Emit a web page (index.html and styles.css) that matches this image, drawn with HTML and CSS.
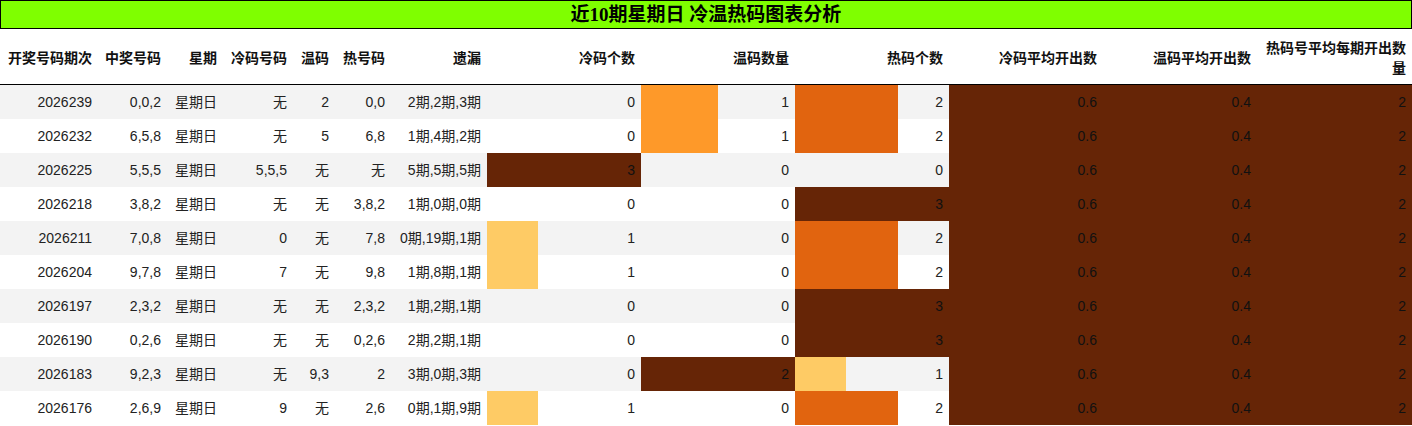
FILE: index.html
```html
<!DOCTYPE html>
<html lang="zh">
<head>
<meta charset="utf-8">
<title>近10期星期日 冷温热码图表分析</title>
<link rel="stylesheet" href="styles.css">
</head>
<body>
<div class="title">近10期星期日 冷温热码图表分析</div>
<table class="grid">
  <colgroup>
    <col class="c1"><col class="c2"><col class="c3"><col class="c4"><col class="c5"><col class="c6"><col class="c7">
    <col class="cn"><col class="cn"><col class="cn"><col class="cn"><col class="cn"><col class="cl">
  </colgroup>
  <thead>
    <tr>
      <th>开奖号码期次</th><th>中奖号码</th><th>星期</th><th>冷码号码</th><th>温码</th><th>热号码</th><th>遗漏</th>
      <th>冷码个数</th><th>温码数量</th><th>热码个数</th><th>冷码平均开出数</th><th>温码平均开出数</th><th>热码号平均每期开出数量</th>
    </tr>
  </thead>
  <tbody>
    <tr>
      <td>2026239</td><td>0,0,2</td><td>星期日</td><td>无</td><td>2</td><td>0,0</td><td>2期,2期,3期</td>
      <td>0</td><td class="bar l2" style="--w:50%">1</td><td class="bar l3" style="--w:66.67%">2</td>
      <td class="avg">0.6</td><td class="avg">0.4</td><td class="avg">2</td>
    </tr>
    <tr>
      <td>2026232</td><td>6,5,8</td><td>星期日</td><td>无</td><td>5</td><td>6,8</td><td>1期,4期,2期</td>
      <td>0</td><td class="bar l2" style="--w:50%">1</td><td class="bar l3" style="--w:66.67%">2</td>
      <td class="avg">0.6</td><td class="avg">0.4</td><td class="avg">2</td>
    </tr>
    <tr>
      <td>2026225</td><td>5,5,5</td><td>星期日</td><td>5,5,5</td><td>无</td><td>无</td><td>5期,5期,5期</td>
      <td class="bar l4" style="--w:100%">3</td><td>0</td><td>0</td>
      <td class="avg">0.6</td><td class="avg">0.4</td><td class="avg">2</td>
    </tr>
    <tr>
      <td>2026218</td><td>3,8,2</td><td>星期日</td><td>无</td><td>无</td><td>3,8,2</td><td>1期,0期,0期</td>
      <td>0</td><td>0</td><td class="bar l4" style="--w:100%">3</td>
      <td class="avg">0.6</td><td class="avg">0.4</td><td class="avg">2</td>
    </tr>
    <tr>
      <td>2026211</td><td>7,0,8</td><td>星期日</td><td>0</td><td>无</td><td>7,8</td><td>0期,19期,1期</td>
      <td class="bar l1" style="--w:33.33%">1</td><td>0</td><td class="bar l3" style="--w:66.67%">2</td>
      <td class="avg">0.6</td><td class="avg">0.4</td><td class="avg">2</td>
    </tr>
    <tr>
      <td>2026204</td><td>9,7,8</td><td>星期日</td><td>7</td><td>无</td><td>9,8</td><td>1期,8期,1期</td>
      <td class="bar l1" style="--w:33.33%">1</td><td>0</td><td class="bar l3" style="--w:66.67%">2</td>
      <td class="avg">0.6</td><td class="avg">0.4</td><td class="avg">2</td>
    </tr>
    <tr>
      <td>2026197</td><td>2,3,2</td><td>星期日</td><td>无</td><td>无</td><td>2,3,2</td><td>1期,2期,1期</td>
      <td>0</td><td>0</td><td class="bar l4" style="--w:100%">3</td>
      <td class="avg">0.6</td><td class="avg">0.4</td><td class="avg">2</td>
    </tr>
    <tr>
      <td>2026190</td><td>0,2,6</td><td>星期日</td><td>无</td><td>无</td><td>0,2,6</td><td>2期,2期,1期</td>
      <td>0</td><td>0</td><td class="bar l4" style="--w:100%">3</td>
      <td class="avg">0.6</td><td class="avg">0.4</td><td class="avg">2</td>
    </tr>
    <tr>
      <td>2026183</td><td>9,2,3</td><td>星期日</td><td>无</td><td>9,3</td><td>2</td><td>3期,0期,3期</td>
      <td>0</td><td class="bar l4" style="--w:100%">2</td><td class="bar l1" style="--w:33.33%">1</td>
      <td class="avg">0.6</td><td class="avg">0.4</td><td class="avg">2</td>
    </tr>
    <tr>
      <td>2026176</td><td>2,6,9</td><td>星期日</td><td>9</td><td>无</td><td>2,6</td><td>0期,1期,9期</td>
      <td class="bar l1" style="--w:33.33%">1</td><td>0</td><td class="bar l3" style="--w:66.67%">2</td>
      <td class="avg">0.6</td><td class="avg">0.4</td><td class="avg">2</td>
    </tr>
  </tbody>
</table>
</body>
</html>
```
FILE: styles.css
```css
html, body {
  margin: 0;
  padding: 0;
  background: #ffffff;
}

body {
  width: 1412px;
  font-family: "Liberation Sans", "Noto Sans CJK SC", sans-serif;
  color: #222222;
}

.title {
  box-sizing: border-box;
  height: 29px;
  border: 1px solid #000000;
  background: #7fff00;
  color: #000000;
  text-align: center;
  font-family: "Liberation Serif", "Noto Sans CJK SC", serif;
  font-weight: bold;
  font-size: 19px;
  line-height: 27px;
}

.grid {
  width: 1412px;
  border-collapse: collapse;
  table-layout: fixed;
  font-size: 14px;
}

.c1 { width: 98px; }
.c2 { width: 69px; }
.c3 { width: 56px; }
.c4 { width: 70px; }
.c5 { width: 42px; }
.c6 { width: 56px; }
.c7 { width: 96px; }
.cn { width: 154px; }
.cl { width: 155px; }

.grid th {
  height: 55px;
  padding: 0 6px 0 2px;
  border-bottom: 1px solid #000000;
  text-align: right;
  vertical-align: middle;
  font-family: "Noto Sans CJK SC", "Liberation Sans", sans-serif;
  font-weight: bold;
  font-size: 14px;
  line-height: 20px;
  color: #111111;
}

.grid td {
  height: 34px;
  padding: 0 6px 0 2px;
  text-align: right;
  vertical-align: middle;
  white-space: nowrap;
  line-height: 20px;
}

.grid tbody tr:nth-child(odd) td {
  background-color: #f3f3f3;
}

.grid tbody tr td.bar {
  background-image: linear-gradient(to right, var(--c) var(--w), transparent var(--w));
}

.l1 { --c: #fecb65; }
.l2 { --c: #fe9929; }
.l3 { --c: #e1640f; }
.l4 { --c: #662506; color: #111111; }

.grid tbody tr td.avg {
  background-color: #662506;
  color: #111111;
}
```
